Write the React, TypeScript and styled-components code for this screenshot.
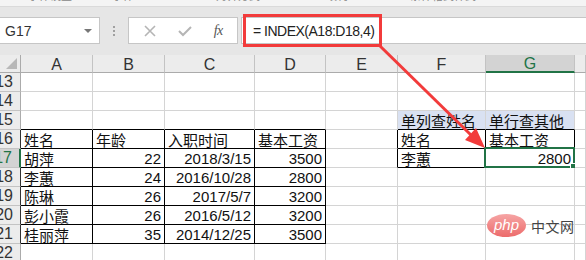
import React from 'react';
import styled, { createGlobalStyle } from 'styled-components';

const GlobalStyle = createGlobalStyle`
	html, body {
		margin: 0;
		padding: 0;
		background: #ffffff;
	}
	* {
		box-sizing: border-box;
	}
`;

const FONT = `'Liberation Sans', 'Noto Sans CJK SC', sans-serif`;
const GRID = '#d4d4d4';
const GREEN = '#217346';

const Page = styled.div`
	position: relative;
	width: 586px;
	height: 260px;
	overflow: hidden;
	font-family: ${FONT};
	background: #ffffff;
`;

const RibbonStrip = styled.div`
	display: flex;
	height: 7px;
	overflow: hidden;
	background: #f4f4f4;
	border-bottom: 1px solid #dadada;
`;

const RibbonLabel = styled.span<{ $ml: number }>`
	margin-left: ${(p) => p.$ml}px;
	margin-top: -10px;
	font-size: 11px;
	line-height: 12px;
	color: #888;
	white-space: nowrap;
`;

const Toolbar = styled.div`
	display: flex;
	align-items: center;
	height: 48px;
	padding-bottom: 1px;
	background: #e6e6e6;
`;

const NameBox = styled.div`
	display: flex;
	align-items: center;
	justify-content: space-between;
	width: 100px;
	height: 27px;
	padding: 0 7px 0 5px;
	background: #fff;
	border: 1px solid #c6c6c6;
	border-left: none;
	font-size: 14px;
	color: #333;
`;

const DropArrow = styled.span`
	width: 0;
	height: 0;
	border-left: 4px solid transparent;
	border-right: 4px solid transparent;
	border-top: 4px solid #777;
`;

const Dots = styled.div`
	display: flex;
	flex-direction: column;
	gap: 2px;
	margin: 0 13px 0 13px;
	span {
		width: 2px;
		height: 2px;
		background: #a0a0a0;
	}
`;

const FxBox = styled.div`
	display: flex;
	align-items: center;
	justify-content: space-around;
	width: 110px;
	height: 27px;
	padding: 0 4px;
	background: #fff;
	border: 1px solid #c6c6c6;
`;

const FxText = styled.span`
	font-family: 'Liberation Serif', serif;
	font-style: italic;
	font-size: 14px;
	color: #555;
	letter-spacing: -0.5px;
`;

const FormulaInput = styled.div`
	display: flex;
	align-items: center;
	flex: 1;
	height: 27px;
	margin-left: 3px;
	background: #fff;
	border: 1px solid #c6c6c6;
	border-right: none;
`;

const RedMark = styled.div`
	display: flex;
	align-items: center;
	height: 33px;
	margin-left: 1px;
	padding: 0 5px 0 7px;
	border: 3px solid #f23b3b;
	font-size: 14px;
	letter-spacing: -0.5px;
	color: #222;
	white-space: pre;
`;

const Sheet = styled.div`
	display: grid;
	grid-template-columns: 21px 72px 72px 90px 71px 72px 88px 89px 1fr;
	grid-template-rows: 18px repeat(10, 19px);
	font-size: 15px;
	color: #111;
`;

const Corner = styled.div`
	position: relative;
	background: #ececec;
	border-right: 1px solid #ababab;
	border-bottom: 1px solid #ababab;
	&::after {
		content: '';
		position: absolute;
		right: 3px;
		bottom: 3px;
		width: 0;
		height: 0;
		border-left: 11px solid transparent;
		border-bottom: 11px solid #b8b8b8;
	}
`;

const ColHead = styled.div<{ $active?: boolean }>`
	display: flex;
	align-items: center;
	justify-content: center;
	background: ${(p) => (p.$active ? '#d3d3d3' : '#ececec')};
	border-right: 1px solid #c3c3c3;
	border-bottom: ${(p) => (p.$active ? `2px solid ${GREEN}` : '1px solid #ababab')};
	color: ${(p) => (p.$active ? GREEN : '#333')};
	font-size: 16px;
	line-height: 1;
	padding-top: 2px;
`;

const RowHead = styled.div<{ $active?: boolean; $edge?: boolean }>`
	display: flex;
	align-items: center;
	justify-content: flex-end;
	overflow: hidden;
	padding-right: 7px;
	background: ${(p) => (p.$active ? '#d3d3d3' : '#ececec')};
	border-right: ${(p) =>
		p.$active ? `2px solid ${GREEN}` : p.$edge ? '1px solid #333' : '1px solid #ababab'};
	border-bottom: 1px solid #c3c3c3;
	color: ${(p) => (p.$active ? GREEN : '#333')};
	font-size: 16px;
	white-space: nowrap;
`;

const Cell = styled.div<{
	$align?: 'left' | 'right';
	$rb?: string;
	$bb?: string;
	$bg?: string;
	$sel?: boolean;
}>`
	position: relative;
	display: flex;
	align-items: center;
	justify-content: ${(p) => (p.$align === 'right' ? 'flex-end' : 'flex-start')};
	padding: 1px 3px 0 3px;
	white-space: nowrap;
	background: ${(p) => p.$bg || '#fff'};
	border-right: 1px solid ${(p) => p.$rb || GRID};
	border-bottom: 1px solid ${(p) => p.$bb || GRID};
	${(p) =>
		p.$sel &&
		`
		&::before {
			content: '';
			position: absolute;
			left: -2px;
			top: -2px;
			right: -1px;
			bottom: -1px;
			border: 2px solid ${GREEN};
		}
		&::after {
			content: '';
			position: absolute;
			right: -4px;
			bottom: -4px;
			width: 6px;
			height: 6px;
			background: ${GREEN};
			border: 1px solid #fff;
		}
	`}
`;

const Arrow = styled.svg`
	position: absolute;
	left: 0;
	top: 0;
	pointer-events: none;
`;

const Watermark = styled.div`
	position: absolute;
	left: 487px;
	top: 214px;
	display: flex;
	align-items: center;
	gap: 5px;
`;

const PhpBadge = styled.div`
	display: flex;
	align-items: center;
	justify-content: center;
	width: 39px;
	height: 23px;
	border-radius: 50%;
	background: linear-gradient(180deg, #f6a5a5 0%, #ec6b6b 100%);
	color: #fff;
	font-family: 'Liberation Sans', sans-serif;
	font-style: italic;
	font-size: 15px;
	padding-bottom: 2px;
`;

const SiteName = styled.span`
	font-family: 'Noto Sans CJK SC', sans-serif;
	font-size: 14px;
	color: #444;
	letter-spacing: 0.5px;
`;

type Val = { t?: string; r?: boolean; bg?: string };

const rows: { n: number; cells: Val[] }[] = [
	{ n: 13, cells: [] },
	{ n: 14, cells: [] },
	{
		n: 15,
		cells: [{}, {}, {}, {}, {}, { t: '单列查姓名', bg: '#d9e1f2' }, { t: '单行查其他', bg: '#d9e1f2' }],
	},
	{
		n: 16,
		cells: [{ t: '姓名' }, { t: '年龄' }, { t: '入职时间' }, { t: '基本工资' }, {}, { t: '姓名' }, { t: '基本工资' }],
	},
	{
		n: 17,
		cells: [
			{ t: '胡萍' },
			{ t: '22', r: true },
			{ t: '2018/3/15', r: true },
			{ t: '3500', r: true },
			{},
			{ t: '李蕙' },
			{ t: '2800', r: true },
		],
	},
	{ n: 18, cells: [{ t: '李蕙' }, { t: '24', r: true }, { t: '2016/10/28', r: true }, { t: '2800', r: true }] },
	{ n: 19, cells: [{ t: '陈琳' }, { t: '26', r: true }, { t: '2017/5/7', r: true }, { t: '3200', r: true }] },
	{ n: 20, cells: [{ t: '彭小霞' }, { t: '26', r: true }, { t: '2016/5/12', r: true }, { t: '3200', r: true }] },
	{ n: 21, cells: [{ t: '桂丽萍' }, { t: '35', r: true }, { t: '2014/12/25', r: true }, { t: '3500', r: true }] },
	{ n: 22, cells: [] },
];

const letters = ['A', 'B', 'C', 'D', 'E', 'F', 'G', ''];

function inTable(n: number, c: number) {
	const main = n >= 16 && n <= 21 && c <= 3;
	const lookup = n >= 16 && n <= 17 && (c === 5 || c === 6);
	return main || lookup;
}

function App() {
	return (
		<Page>
			<GlobalStyle />
			<RibbonStrip>
				<RibbonLabel $ml={28}>字体设置</RibbonLabel>
				<RibbonLabel $ml={40}>字体</RibbonLabel>
				<RibbonLabel $ml={82}>对齐方式</RibbonLabel>
				<RibbonLabel $ml={70}>数字</RibbonLabel>
				<RibbonLabel $ml={58}>条件格式样式</RibbonLabel>
			</RibbonStrip>
			<Toolbar>
				<NameBox>
					G17
					<DropArrow />
				</NameBox>
				<Dots>
					<span />
					<span />
					<span />
				</Dots>
				<FxBox>
					<svg width="14" height="14" viewBox="0 0 14 14">
						<path d="M2 2 L12 12 M12 2 L2 12" stroke="#b5b5b5" strokeWidth="1.6" fill="none" />
					</svg>
					<svg width="16" height="14" viewBox="0 0 16 14">
						<path d="M2 7 L6 11 L14 3" stroke="#b5b5b5" strokeWidth="2" fill="none" />
					</svg>
					<FxText>fx</FxText>
				</FxBox>
				<FormulaInput>
					<RedMark>= INDEX(A18:D18,4)</RedMark>
				</FormulaInput>
			</Toolbar>
			<Sheet>
				<Corner />
				{letters.map((l, i) => (
					<ColHead key={i} $active={l === 'G'}>
						{l}
					</ColHead>
				))}
				{rows.map((row) => (
					<React.Fragment key={row.n}>
						<RowHead $active={row.n === 17} $edge={row.n >= 16 && row.n <= 21}>
							{row.n}
						</RowHead>
						{Array.from({ length: 8 }).map((_, c) => {
							const v = row.cells[c] || {};
							const n = row.n;
							const black =
								inTable(n, c) || (c === 4 && n >= 16 && n <= 17) ? '#000' : undefined;
							const below =
								inTable(n, c) || (n === 15 && (c <= 3 || c === 5 || c === 6)) ? '#000' : undefined;
							return (
								<Cell
									key={c}
									$align={v.r ? 'right' : 'left'}
									$rb={black}
									$bb={below}
									$bg={v.bg}
									$sel={n === 17 && c === 6}
								>
									{v.t}
								</Cell>
							);
						})}
					</React.Fragment>
				))}
			</Sheet>
			<Arrow width="586" height="260" viewBox="0 0 586 260">
				<line x1="380" y1="46" x2="472" y2="136" stroke="#f23b3b" strokeWidth="3" />
				<polygon points="485,148 465,140 476,128" fill="#f23b3b" />
			</Arrow>
			<Watermark>
				<PhpBadge>php</PhpBadge>
				<SiteName>中文网</SiteName>
			</Watermark>
		</Page>
	);
}

export default App;
